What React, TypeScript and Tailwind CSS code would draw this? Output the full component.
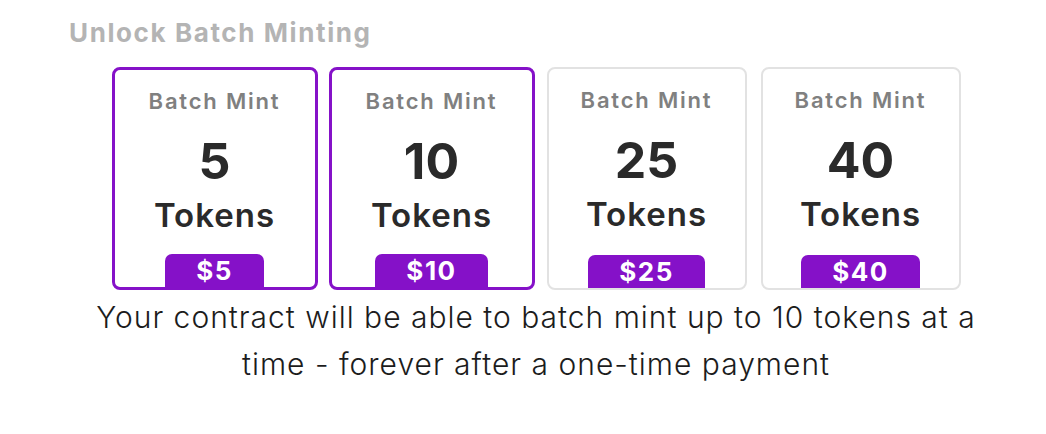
import React from 'react';

type Tier = { count: number; price: string; selected: boolean; width: string };

const tiers: Tier[] = [
  { count: 5, price: '$5', selected: true, width: 'w-[206px]' },
  { count: 10, price: '$10', selected: true, width: 'w-[206px]' },
  { count: 25, price: '$25', selected: false, width: 'w-[200px]' },
  { count: 40, price: '$40', selected: false, width: 'w-[200px]' },
];

const TierCard = ({ tier }: { tier: Tier }) => (
  <div
    className={`flex h-[223px] flex-col items-center rounded-[8px] bg-white ${tier.width} ${
      tier.selected ? 'border-[3px] border-[#8511c8]' : 'border-2 border-[#e2e2e2]'
    }`}
  >
    <div className="mt-[18px] text-[22px] leading-[26px] font-semibold tracking-[1.8px] text-[#808080]">
      Batch Mint
    </div>
    <div className="mt-[19px] text-[50px] leading-[56px] font-bold text-[#2a2a2a]">{tier.count}</div>
    <div className="mt-[6px] text-[33px] leading-[40px] font-semibold tracking-[1px] text-[#2a2a2a]">
      Tokens
    </div>
    <div className="mt-auto flex h-[33px] items-center rounded-t-[7px] bg-[#8511c8] px-[31px] text-[26px] leading-none font-bold tracking-[1.5px] text-white">
      {tier.price}
    </div>
  </div>
);

export default function App() {
  return (
    <div className="h-[434px] w-[1046px] bg-white pr-[43px] pl-[69px] font-['Inter',sans-serif]">
      <div className="pt-[17px] text-[26px] leading-[32px] font-bold tracking-[1.6px] text-[#b4b4b4]">
        Unlock Batch Minting
      </div>
      <div className="mt-[18px] flex justify-center">
        <div className="flex">
          <div className="mr-[11px]">
            <TierCard tier={tiers[0]} />
          </div>
          <div className="mr-[12px]">
            <TierCard tier={tiers[1]} />
          </div>
          <div className="mr-[14px]">
            <TierCard tier={tiers[2]} />
          </div>
          <TierCard tier={tiers[3]} />
        </div>
      </div>
      <p className="mx-auto mt-[4px] w-[910px] text-center text-[30px] leading-[47px] font-light tracking-[1px] text-[#1c1c1c]">
        Your contract will be able to batch mint up to 10 tokens at a time - forever after a one-time payment
      </p>
    </div>
  );
}
